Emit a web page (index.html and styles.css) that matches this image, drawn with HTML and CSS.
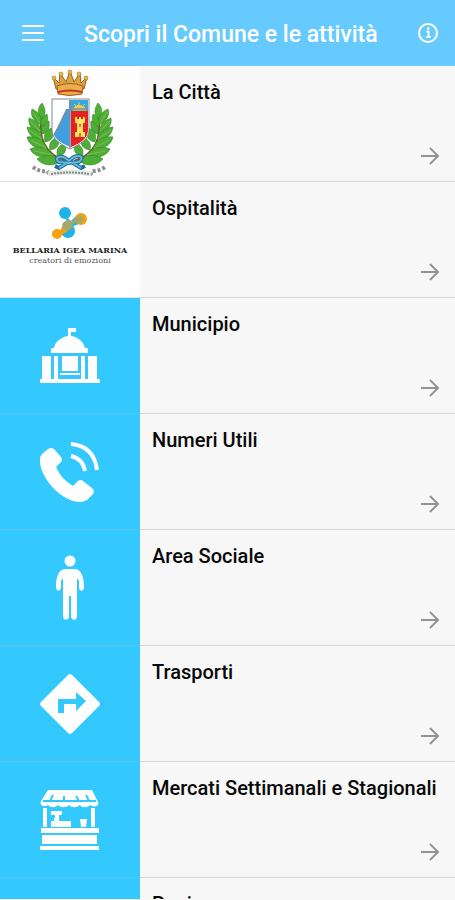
FILE: index.html
```html
<!DOCTYPE html>
<html lang="it">
<head>
<meta charset="utf-8">
<meta name="viewport" content="width=device-width, initial-scale=1">
<title>Scopri il Comune e le attività</title>
<link rel="stylesheet" href="styles.css">
</head>
<body>
<svg class="defs" aria-hidden="true">
  <symbol id="arrow" viewBox="0 0 20 20"><path d="M1 10H18M10 2l8 8-8 8" fill="none" stroke="currentColor" stroke-width="2"/></symbol>
</svg>
<div class="app">
<header class="bar">
  <button class="icon-button" type="button" aria-label="Menu">
    <svg width="24" height="24" viewBox="0 0 24 24"><path d="M2 5h20M2 12h20M2 19h20" stroke="currentColor" stroke-width="2" stroke-linecap="round"/></svg>
  </button>
  <h1 class="title">Scopri il Comune e le attività</h1>
  <button class="icon-button" type="button" aria-label="Informazioni">
    <svg width="24" height="24" viewBox="0 0 24 24"><circle cx="12" cy="12" r="9" fill="none" stroke="currentColor" stroke-width="2"/><path d="M10.500 10.500H12.500V16M10.500 16h4" fill="none" stroke="currentColor" stroke-width="2"/><circle cx="12.200" cy="7.500" r="1.200" fill="currentColor"/></svg>
  </button>
</header>
<main class="list">
  <a class="row" href="#citta">
    <span class="thumb thumb-light">
      <svg width="140" height="115" viewBox="0 0 140 115">
        <defs>
          <g id="leaves" fill="#4fae35" stroke="#2f8527" stroke-width=".6">
            <path d="M66 95C48 89 37 75 42 50" fill="none" stroke="#80562e" stroke-width="2"/>
            <path d="M42 53c-5-4-5-11 0-16 4 6 4 12 0 16z"/>
            <path d="M41 59c-8-4-11-10-9-16 7 3 11 9 9 16z"/>
            <path d="M41 67c-10-2-13-9-12-15 8 3 12 8 12 15z"/>
            <path d="M43 74c-10 0-15-6-16-13 9 1 14 6 16 13z"/>
            <path d="M47 82c-11 2-18-3-20-11 9-1 16 2 20 11z"/>
            <path d="M53 89c-9 4-19 2-23-6 9-4 18-1 23 6z"/>
            <path d="M61 95c-8 6-18 5-24-2 8-5 18-5 24 2z"/>
            <path d="M42 61c-3-6 0-10 5-13 2 6 0 11-5 13z"/>
            <path d="M42 68c-1-7 2-11 7-13 1 7-1 12-7 13z"/>
            <path d="M45 76c-2-9 1-12 7-14 3 8 0 13-7 14z"/>
            <path d="M50 84c-2-8 3-12 9-13 1 8-2 12-9 13z"/>
            <path d="M58 91c-3-7 1-12 7-14 2 7 0 12-7 14z"/>
            <path d="M33 46l7 11M30 55l10 10M29 64l13 9M31 74l15 8M35 85l18 4" fill="none" stroke="#90cc61"/>
          </g>
        </defs>
        <use href="#leaves"/>
        <use href="#leaves" transform="translate(140 0) scale(-1 1)"/>
        <path d="M52 33h37v31c0 9-8 14-19 19-10-5-18-10-18-19z" fill="#fff" stroke="#7e8994"/>
        <path d="M69 34h19v11H69z" fill="#36a8df"/>
        <path d="M73 44c1-6 11-6 13 0zM79 36v8M74 38l5 5M85 38l-5 5" fill="#f4cd45" stroke="#e5cf5b"/>
        <path d="M71 45h17v19c0 8-7 13-17 17z" fill="#e72020"/>
        <path d="M66 43h4v38c-7-3-14-7-16-12z" fill="#419fe0"/>
        <path d="M70 34v48M68 43L54 69M70 43h18" fill="none" stroke="#7d8d9b" stroke-width="1.500"/>
        <path d="M75 51h2v2h2v-2h2v2h2v-2h2v6h-2v9h2v5H75v-5h2v-9h-2z" fill="#ffe364"/>
        <path d="M80 58v3M80 67v4" stroke="#c84f22" stroke-width="1.500"/>
        <path d="M56 23L53 11l6 6 1-10 6 9 4-11 4 11 6-9 1 10 6-6-3 12z" fill="#dca43a" stroke="#986026"/>
        <path d="M57 20q13-5 26 0l-1 8q-12 3-24 0z" fill="#e9b04a" stroke="#a35b25"/>
        <path d="M58 26q12-3 24 0" fill="none" stroke="#c92e25" stroke-width="2"/>
        <g fill="#e9bd45" stroke="#a46e2b" stroke-width=".6"><circle cx="54" cy="12" r="2"/><circle cx="61" cy="8" r="2"/><circle cx="70" cy="6" r="2"/><circle cx="79" cy="8" r="2"/><circle cx="86" cy="12" r="2"/></g>
        <path d="M69 95c-8-8-16-3-10 1l10 1 10-1c7-6-2-9-10-1M67 97l-8 5-4-2M73 97l8 5 4-2" fill="none" stroke="#216d9d" stroke-width="4"/>
        <path d="M69 95c-8-8-16-3-10 1l10 1 10-1c7-6-2-9-10-1M67 97l-8 5M73 97l8 5" fill="none" stroke="#62b9dc" stroke-width="2"/>
        <path d="M33 101q6 5 14 4l3 4M90 109l2-4q8 0 13-4" fill="none" stroke="#8c9296" stroke-width="4" stroke-dasharray="3 2"/>
        <path d="M48 108q22-4 43 0" fill="none" stroke="#e5e8e8" stroke-width="5"/>
        <path d="M51 108q20-3 38 0" fill="none" stroke="#858b8d" stroke-width="2" stroke-dasharray="2 1"/>
      </svg>
    </span>
    <span class="content"><span class="label">La Città</span><svg class="arrow"><use href="#arrow"/></svg></span>
  </a>
  <a class="row" href="#ospitalita">
    <span class="thumb thumb-light brand">
      <svg width="36" height="32" viewBox="0 0 36 32">
        <path d="M14 10l5 4 6-6 2 9-8 3-4 3z" fill="#20b3e8"/>
        <circle cx="13" cy="6" r="6" fill="#20b3e8"/>
        <circle cx="16" cy="24" r="7" fill="#20b3e8"/>
        <circle cx="29" cy="12" r="6" fill="#f4a20d"/>
        <circle cx="5" cy="27" r="5" fill="#f4a20d"/>
        <path d="M8 23l4-4 4 5-7 4z" fill="#f4a20d"/>
        <path d="M11 21c-3-5 3-9 8-7 4 0 6-6 10-6 5 5 1 10-4 8-4-1-4 1-5 4-1 4-7 5-9 1z" fill="#a7a867"/>
      </svg>
      <span class="brand-name">BELLARIA IGEA MARINA</span>
      <span class="brand-tagline">creatori di emozioni</span>
    </span>
    <span class="content"><span class="label">Ospitalità</span><svg class="arrow"><use href="#arrow"/></svg></span>
  </a>
  <a class="row" href="#municipio">
    <span class="thumb">
      <svg width="60" height="55" viewBox="0 0 60 55" fill="currentColor"><path d="M28 8V0h8v4h-5v4c8 1 13 7 14 12h3v5H11v-5h3c1-6 7-11 14-12zM2 28h9v23H2zM14 28h4v23h-4zM22 28h16v15H22zM41 28h4v23h-4zM48 28h9v23h-9zM20 45h20v2H20zM0 51h60v4H0z"/></svg>
    </span>
    <span class="content"><span class="label">Municipio</span><svg class="arrow"><use href="#arrow"/></svg></span>
  </a>
  <a class="row" href="#numeri">
    <span class="thumb">
      <svg width="60" height="60" viewBox="0 0 60 60" fill="none"><path d="M2 12l6-5q3-2 6 0l7 8q2 3 0 5l-5 5q5 12 17 19l5-5q3-2 5 0l9 7q3 3 1 6l-6 6q-3 2-8 2C20 59-1 34 0 18q0-4 2-6z" fill="currentColor"/><path d="M31 2Q54 4 57 28M31 14Q43 17 45 29" stroke="currentColor" stroke-width="4"/></svg>
    </span>
    <span class="content"><span class="label">Numeri Utili</span><svg class="arrow"><use href="#arrow"/></svg></span>
  </a>
  <a class="row" href="#sociale">
    <span class="thumb">
      <svg width="60" height="66" viewBox="0 0 60 66" fill="currentColor"><circle cx="30" cy="6" r="5.500"/><path d="M26 14h8c7 0 10 7 10 18 0 5-5 5-5 0V26l-2-3v38c0 5-6 5-6 0V41h-2v20c0 5-6 5-6 0V23l-2 3v6c0 5-5 5-5 0 0-11 3-18 10-18z"/></svg>
    </span>
    <span class="content"><span class="label">Area Sociale</span><svg class="arrow"><use href="#arrow"/></svg></span>
  </a>
  <a class="row" href="#trasporti">
    <span class="thumb">
      <svg width="60" height="60" viewBox="0 0 60 60" fill="currentColor"><path fill-rule="evenodd" d="M28 1q2-2 4 0l27 27q2 2 0 4L32 59q-2 2-4 0L1 32q-2-2 0-4zM18 25v14h6v-9h12v7l10-10-10-9v7z"/></svg>
    </span>
    <span class="content"><span class="label">Trasporti</span><svg class="arrow"><use href="#arrow"/></svg></span>
  </a>
  <a class="row" href="#mercati">
    <span class="thumb">
      <svg class="market" width="60" height="62" viewBox="0 0 60 62"><path d="M8 1h44l6 12c2 4-4 6-8 3-3 3-8 3-10 0-4 3-8 3-11 0-3 3-8 3-11 0-3 3-7 3-10 0-4 3-9 0-7-4zM3 19h4v19H3zM51 19h4v19h-4zM11 22h11v4h-3v3h-4v-3h-4zM14 29h5v3h12v6H11v-6h3zM40 30h7l-1 8h-5zM1 39h58v5H1zM2 46h55v9H2zM0 57h59v4H0z" fill="currentColor"/><path d="M3 12h53M13 6l-3 6M24 7v5M36 7l3 5M46 6l3 6" class="detail"/></svg>
    </span>
    <span class="content"><span class="label">Mercati Settimanali e Stagionali</span><svg class="arrow"><use href="#arrow"/></svg></span>
  </a>
  <a class="row" href="#pagine">
    <span class="thumb"></span>
    <span class="content"><span class="label">Pagine</span><svg class="arrow"><use href="#arrow"/></svg></span>
  </a>
</main>
</div>
</body>
</html>
```
FILE: styles.css
```css
* { box-sizing: border-box; }
body {
  margin: 0;
  background: #f7f7f7;
  color: #080808;
  font-family: Roboto, sans-serif;
}
.defs { display: none; }
.app {
  height: 100vh;
  display: flex;
  flex-direction: column;
  padding-bottom: 1px;
  overflow: hidden;
}
.bar {
  flex: none;
  height: 66px;
  display: flex;
  align-items: center;
  justify-content: space-between;
  padding: 0 12px;
  background: #66caff;
  color: #fff;
}
.icon-button {
  display: grid;
  place-items: center;
  width: 42px;
  height: 42px;
  padding: 0;
  border: 0;
  background: none;
  color: inherit;
}
.bar .icon-button:last-child { width: 30px; }
.title {
  flex: 1;
  margin: 0;
  padding: 4px 0 0 30px;
  font-size: 23px;
  line-height: 28px;
  font-weight: 500;
  white-space: nowrap;
}
.list {
  flex: 1;
  min-height: 0;
  overflow: hidden;
}
.row {
  display: grid;
  grid-template-columns: 140px 1fr;
  height: 116px;
  color: inherit;
  text-decoration: none;
}
.thumb {
  display: flex;
  flex-direction: column;
  align-items: center;
  justify-content: center;
  border-bottom: 1px solid #5cc1e4;
  background: #33c9ff;
  color: #fff;
}
.thumb-light {
  border-color: #dedede;
  background: #fff;
}
.content {
  display: flex;
  flex-direction: column;
  justify-content: space-between;
  padding: 12px 15px 15px 12px;
  border-bottom: 1px solid #d6d6d9;
}
.label {
  font-size: 20px;
  line-height: 28px;
  font-weight: 500;
}
.arrow {
  width: 20px;
  height: 20px;
  align-self: flex-end;
  color: #939393;
}
.brand {
  padding-bottom: 6px;
  color: #222;
  font-family: "DejaVu Serif", serif;
}
.brand-name {
  margin-top: 6px;
  font-size: 8px;
  line-height: 11px;
  font-weight: 700;
  white-space: nowrap;
}
.brand-tagline {
  color: #555;
  font-size: 8px;
  line-height: 10px;
}
.detail {
  fill: none;
  stroke: #33c9ff;
  stroke-width: 2;
}
```
